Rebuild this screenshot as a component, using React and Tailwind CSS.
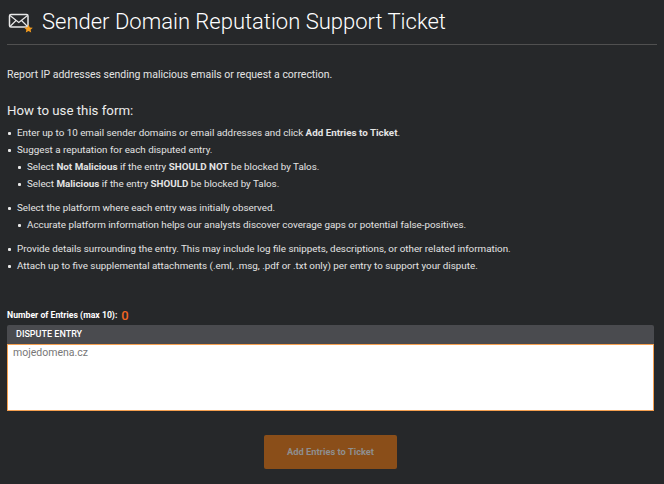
function MailStarIcon() {
  return (
    <svg width="26" height="24" viewBox="0 0 26 24" className="shrink-0">
      <rect x="1.5" y="4.5" width="18.5" height="12.5" rx="1.5" fill="none" stroke="#e8e8e8" strokeWidth="1.5" />
      <path d="M2 5.5 L10.8 12.5 L19.5 5.5 M2 16.5 L8 10.5 M19.5 16.5 L13.5 10.5" fill="none" stroke="#e8e8e8" strokeWidth="1.2" />
      <path d="M20.5 14.5 L21.8 17.4 L24.8 17.7 L22.6 19.7 L23.2 22.6 L20.5 21.1 L17.8 22.6 L18.4 19.7 L16.2 17.7 L19.2 17.4 Z" fill="#f39c1f" />
    </svg>
  );
}

function Item({ children, sub }) {
  return (
    <li className={sub ? "flex items-center h-4 pl-[11px]" : "flex items-center h-4"}>
      <span className={sub ? "w-[3px] h-[3px] bg-[#e8e8e8] rounded-[1px] mr-[6px] shrink-0" : "w-[3px] h-[3px] bg-[#e8e8e8] rounded-[1px] mr-[6px] ml-[1px] shrink-0"} />
      <span>{children}</span>
    </li>
  );
}

export default function App() {
  return (
    <div className="w-[664px] h-[484px] overflow-hidden bg-[#26282a] text-[#e4e4e4] font-['Roboto',sans-serif] px-[7px]">
      <div className="flex items-center h-[45px] border-b border-[#505050] pb-[1px]">
        <div className="w-[35px] pl-[1px]"><MailStarIcon /></div>
        <h1 className="text-[22px] font-light text-white leading-none">Sender Domain Reputation Support Ticket</h1>
      </div>

      <p className="mt-[22px] text-[10.47px] leading-4">Report IP addresses sending malicious emails or request a correction.</p>

      <h2 className="mt-[18px] text-[13.25px] text-[#ececec] leading-5">How to use this form:</h2>

      <div className="mt-[4px] text-[9.82px] leading-4">
        <ul className="flex flex-col gap-[1px]">
          <Item>Enter up to 10 email sender domains or email addresses and click <b className="font-bold">Add Entries to Ticket</b>.</Item>
          <Item>Suggest a reputation for each disputed entry.</Item>
          <Item sub>Select <b className="font-bold">Not Malicious</b> if the entry <b className="font-bold">SHOULD NOT</b> be blocked by Talos.</Item>
          <Item sub>Select <b className="font-bold">Malicious</b> if the entry <b className="font-bold">SHOULD</b> be blocked by Talos.</Item>
        </ul>
        <ul className="flex flex-col gap-[1px] mt-[8px]">
          <Item>Select the platform where each entry was initially observed.</Item>
          <Item sub>Accurate platform information helps our analysts discover coverage gaps or potential false-positives.</Item>
        </ul>
        <ul className="flex flex-col gap-[1px] mt-[8px]">
          <Item>Provide details surrounding the entry. This may include log file snippets, descriptions, or other related information.</Item>
          <Item>Attach up to five supplemental attachments (.eml, .msg, .pdf or .txt only) per entry to support your dispute.</Item>
        </ul>
      </div>

      <div className="mt-[34px] flex items-center gap-[4px] h-4">
        <span className="text-[8.7px] font-bold text-white">Number of Entries (max 10):</span>
        <span className="text-[13px] font-medium text-[#f26522]">0</span>
      </div>

      <div className="mt-[1px] w-[647px]">
        <div className="h-[19px] bg-[#4a4b4f] rounded-t-[2px] flex items-center pl-[9px] text-[9px] font-medium text-white">DISPUTE ENTRY</div>
        <div className="h-[67px] bg-white border border-[#f5a050] px-[5px] pt-[1px] text-[10.5px] leading-[14px] text-[#777]">mojedomena.cz</div>
      </div>

      <div className="mt-[24px] flex justify-center">
        <button className="w-[133px] h-[34px] ml-[-3px] bg-[#8a4e19] rounded-[2px] text-[9.3px] font-bold text-[#8f8f8f]">Add Entries to Ticket</button>
      </div>
    </div>
  );
}
